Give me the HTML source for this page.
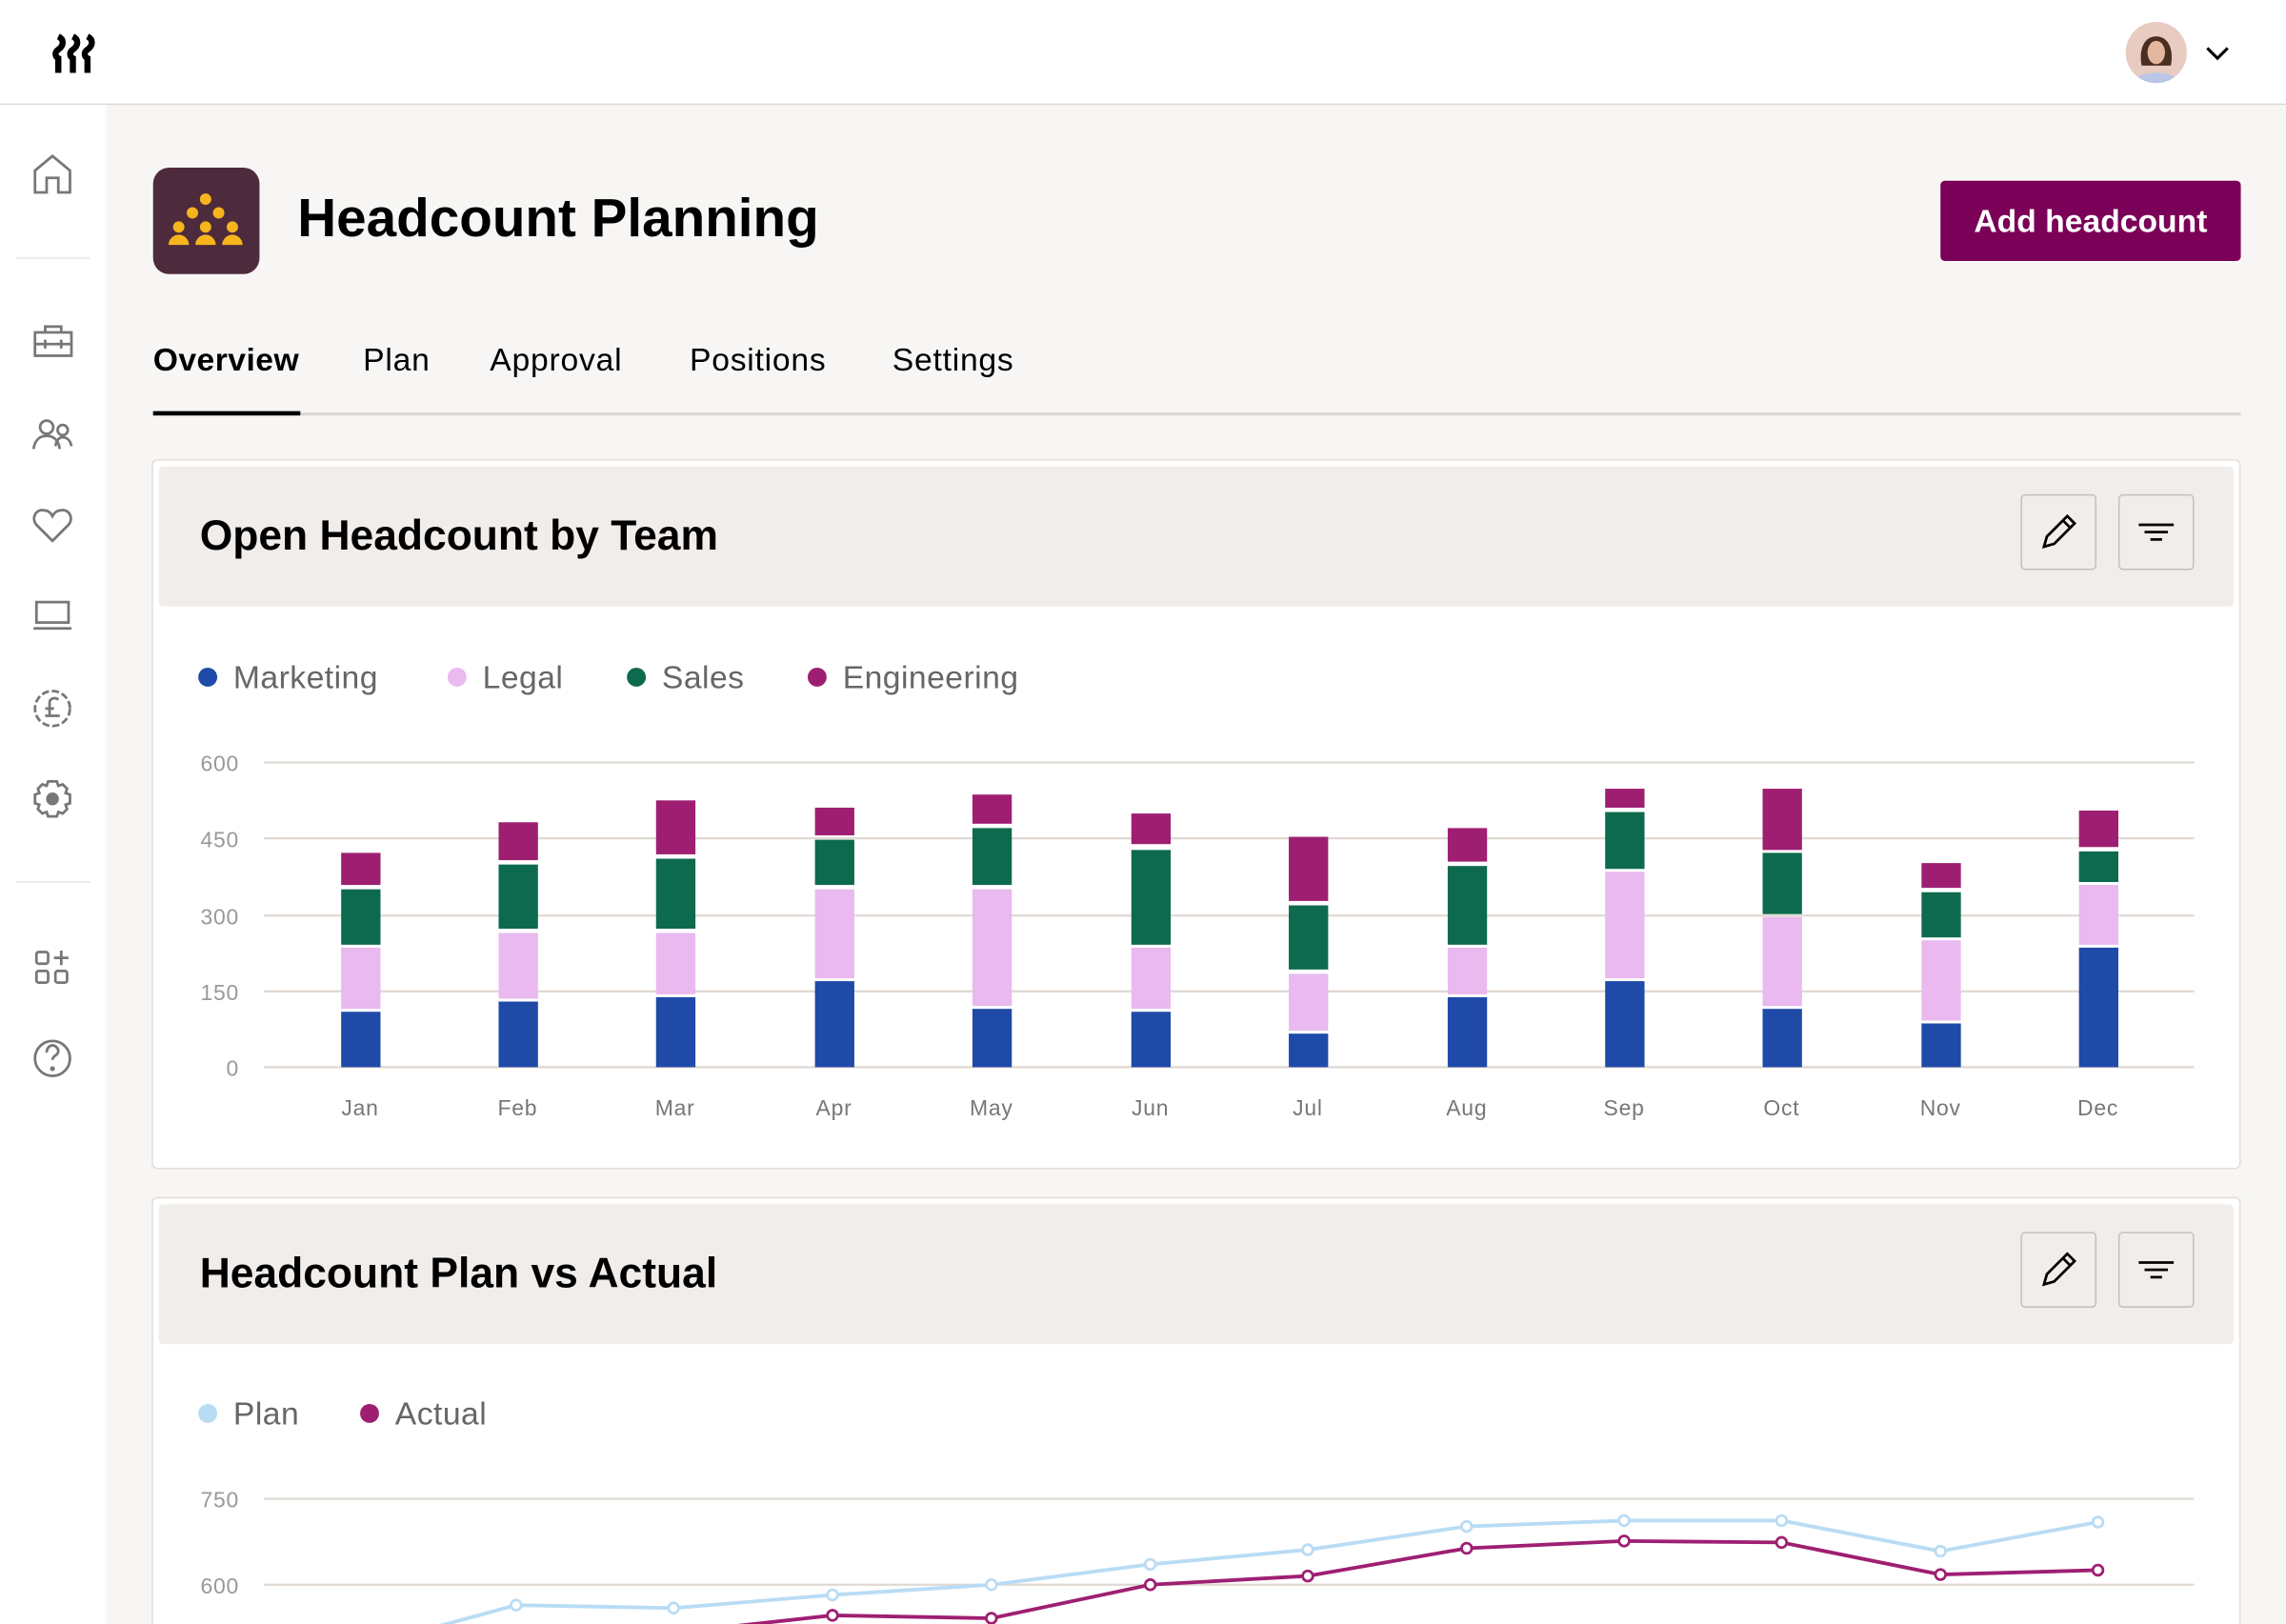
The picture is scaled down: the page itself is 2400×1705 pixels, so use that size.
<!DOCTYPE html>
<html><head><meta charset="utf-8">
<style>
*{box-sizing:border-box;margin:0;padding:0}
html,body{width:2400px;height:1704px;overflow:hidden;background:#f7f6f4}
#w{position:absolute;left:0;top:0;width:1568px;height:1114px;transform:scale(1.530612);transform-origin:0 0;font-family:"Liberation Sans",sans-serif;background:#f7f6f4;overflow:hidden}
.abs{position:absolute}
#hdr{left:0;top:0;width:1568px;height:72px;background:#fff;border-bottom:1.5px solid #e0d9d3}
#side{left:0;top:72px;width:73px;height:1050px;background:#fff}
.t{position:absolute;white-space:nowrap}
.tab{position:absolute;white-space:nowrap;font-size:22px;letter-spacing:0.5px;top:234px}
.card{position:absolute;left:104px;width:1433px;background:#fff;border:1.5px solid #e3ddd8;border-radius:4px}
.ch{position:absolute;left:4px;top:4px;right:4px;height:96px;background:#f1edea;border-radius:3px}
.ib{position:absolute;width:52px;height:52px;border:1.5px solid #c4c0bd;border-radius:3px;background:#f1edea}
.leg{position:absolute;font-size:22px;color:#666;white-space:nowrap;letter-spacing:0.3px}
.dot{display:inline-block;width:13px;height:13px;border-radius:50%;margin-right:11px;vertical-align:1px}
</style></head><body><div id="w">
<div id="hdr" class="abs">
<svg class="abs" style="left:34px;top:22px" width="40" height="30" viewBox="0 0 40 30"><g fill="none" stroke="#000" stroke-width="4.2"><path d="M6 3c4 2 4 6 0 9c-3 2 -2 5 0 6v10"/><path d="M16 3c4 2 4 6 0 9c-3 2 -2 5 0 6v10"/><path d="M26 3c4 2 4 6 0 9c-3 2 -2 5 0 6v10"/></g></svg>
<svg class="abs" style="left:1458px;top:15px" width="42" height="42" viewBox="0 0 42 42"><defs><clipPath id="c"><circle cx="21" cy="21" r="21"/></clipPath></defs><g clip-path="url(#c)"><rect width="42" height="42" fill="#e8cbc1"/><path d="M11 30c-2-10 1-20 10-20s12 10 10 20z" fill="#4a2e22"/><ellipse cx="21" cy="21" rx="6" ry="8" fill="#e3b79e"/><path d="M4 44c2-7 9-9 17-9s15 2 17 9z" fill="#b9c6e6"/></g></svg>
<svg class="abs" style="left:1512px;top:30px" width="18" height="12" viewBox="0 0 18 12"><path d="M2 3l7 7 7-7" fill="none" stroke="#000" stroke-width="2"/></svg>
</div>
<div id="side" class="abs">
<svg width="73" height="700" viewBox="0 72 73 700" fill="none" stroke="#777" stroke-width="1.8">
<path d="M24 132V117l12-10 12 10v15h-8v-10h-8v10z"/>
<line x1="11" y1="177" x2="62" y2="177" stroke="#eee" stroke-width="1.5"/>
<rect x="24" y="228" width="25" height="16"/><path d="M31 228v-4h11v4M24 236h25M31 233v6M42 233v6"/>
<circle cx="32" cy="293" r="4.5"/><circle cx="43" cy="295" r="3.5"/><path d="M23 308c1-7 5-9 9-9s8 2 9 9M38 306c1-5 3-6 5-6s5 1 6 6"/>
<path d="M36 371l-11-11c-4-5 0-11 5-10 3 0 5 2 6 4 1-2 3-4 6-4 5-1 9 5 5 10z"/>
<rect x="25" y="413" width="22" height="14"/><path d="M23 431h26"/>
<circle cx="36" cy="486" r="12" stroke-dasharray="5 2"/><path d="M40 480c-2-2-6-1-6 2v9M31 486h6M31 491h10"/>
<path d="M33 536h6l1 3 3-1 3 3-1 3 3 1v6l-3 1 1 3-3 3-3-1-1 3h-6l-1-3-3 1-3-3 1-3-3-1v-6l3-1-1-3 3-3 3 1z"/><circle cx="36" cy="548" r="3.5" fill="#777"/>
<line x1="11" y1="605" x2="62" y2="605" stroke="#eee" stroke-width="1.5"/>
<rect x="25" y="653" width="8" height="8" rx="1.5"/><rect x="25" y="666" width="8" height="8" rx="1.5"/><rect x="38" y="666" width="8" height="8" rx="1.5"/><path d="M42 652v10M37 657h10"/>
<circle cx="36" cy="726" r="12"/><path d="M32 722c0-3 2-5 4-5s4 2 4 4c0 3-4 3-4 6"/><circle cx="36" cy="733" r="0.8" fill="#777"/>
</svg>
</div>
<div class="abs" style="left:105px;top:115px;width:73px;height:73px;background:#4e2b3c;border-radius:11px">
<svg width="73" height="73" viewBox="0 0 73 73" fill="#f6b51d"><circle cx="36" cy="21.6" r="3.9"/><circle cx="27" cy="31" r="3.9"/><circle cx="45" cy="31" r="3.9"/><circle cx="17.6" cy="40.7" r="3.9"/><circle cx="36" cy="40.7" r="3.9"/><circle cx="54.4" cy="40.7" r="3.9"/><path d="M10.6 53a7 7 0 0 1 14 0zM29 53a7 7 0 0 1 14 0zM47.4 53a7 7 0 0 1 14 0z"/></svg></div>
<div class="t" style="left:204px;top:129px;font-size:37px;font-weight:600;color:#000">Headcount Planning</div>
<div class="abs" style="left:1331px;top:124px;width:206px;height:55px;background:#7a0058;border-radius:3px;color:#fff;font-size:22px;font-weight:600;text-align:center;line-height:55px">Add headcount</div>
<div class="tab" style="left:105px;font-weight:600;letter-spacing:0.3px">Overview</div>
<div class="tab" style="left:249px">Plan</div>
<div class="tab" style="left:336px">Approval</div>
<div class="tab" style="left:473px">Positions</div>
<div class="tab" style="left:612px">Settings</div>
<div class="abs" style="left:105px;top:283px;width:1432px;height:1.5px;background:#ddd6d0"></div>
<div class="abs" style="left:105px;top:282px;width:101px;height:3px;background:#000"></div>

<div class="card" style="top:315px;height:487px"><div class="ch"></div>
<div class="t" style="left:32px;top:36px;font-size:29px;font-weight:600">Open Headcount by Team</div>
<div class="ib" style="left:1281px;top:23px"><svg width="50" height="50" viewBox="0 0 50 50"><path d="M15 35l2-7 14-14 5 5-14 14z M28 17l5 5" fill="none" stroke="#000" stroke-width="1.8"/></svg></div>
<div class="ib" style="left:1348px;top:23px"><svg width="50" height="50" viewBox="0 0 50 50"><path d="M13 20h24M17 25h16M21 30h8" stroke="#000" stroke-width="1.8"/></svg></div>
</div>
<div class="leg" style="left:136px;top:452px"><span class="dot" style="background:#1f4aa8"></span>Marketing</div>
<div class="leg" style="left:307px;top:452px"><span class="dot" style="background:#e9b9f0"></span>Legal</div>
<div class="leg" style="left:430px;top:452px"><span class="dot" style="background:#0e6a4e"></span>Sales</div>
<div class="leg" style="left:554px;top:452px"><span class="dot" style="background:#9e1f72"></span>Engineering</div>
<svg class="abs" style="left:0;top:0" width="1568" height="1114" viewBox="0 0 1568 1114" font-family="Liberation Sans, sans-serif">
<g stroke="#e0d9d3" stroke-width="1.5"><line x1="181" y1="523" x2="1505" y2="523"/><line x1="181" y1="575" x2="1505" y2="575"/><line x1="181" y1="628" x2="1505" y2="628"/><line x1="181" y1="680" x2="1505" y2="680"/><line x1="181" y1="732" x2="1505" y2="732"/></g>
<g fill="#999" font-size="15" text-anchor="end" letter-spacing="0.5"><text x="164" y="529">600</text><text x="164" y="581">450</text><text x="164" y="634">300</text><text x="164" y="686">150</text><text x="164" y="738">0</text></g>
<g fill="#777" font-size="15" text-anchor="middle" letter-spacing="0.5"><text x="247" y="765">Jan</text><text x="355" y="765">Feb</text><text x="463" y="765">Mar</text><text x="572" y="765">Apr</text><text x="680" y="765">May</text><text x="789" y="765">Jun</text><text x="897" y="765">Jul</text><text x="1006" y="765">Aug</text><text x="1114" y="765">Sep</text><text x="1222" y="765">Oct</text><text x="1331" y="765">Nov</text><text x="1439" y="765">Dec</text></g>
<g fill="#1f4aa8"><rect x="234" y="694" width="27" height="38"/><rect x="342" y="687" width="27" height="45"/><rect x="450" y="684" width="27" height="48"/><rect x="559" y="673" width="27" height="59"/><rect x="667" y="692" width="27" height="40"/><rect x="776" y="694" width="27" height="38"/><rect x="884" y="709" width="27" height="23"/><rect x="993" y="684" width="27" height="48"/><rect x="1101" y="673" width="27" height="59"/><rect x="1209" y="692" width="27" height="40"/><rect x="1318" y="702" width="27" height="30"/><rect x="1426" y="650" width="27" height="82"/></g>
<g fill="#e9b9f0"><rect x="234" y="650" width="27" height="42"/><rect x="342" y="640" width="27" height="45"/><rect x="450" y="640" width="27" height="42"/><rect x="559" y="610" width="27" height="61"/><rect x="667" y="610" width="27" height="80"/><rect x="776" y="650" width="27" height="42"/><rect x="884" y="668" width="27" height="39"/><rect x="993" y="650" width="27" height="32"/><rect x="1101" y="598" width="27" height="73"/><rect x="1209" y="629" width="27" height="61"/><rect x="1318" y="645" width="27" height="55"/><rect x="1426" y="607" width="27" height="41"/></g>
<g fill="#0e6a4e"><rect x="234" y="610" width="27" height="38"/><rect x="342" y="593" width="27" height="44"/><rect x="450" y="589" width="27" height="48"/><rect x="559" y="576" width="27" height="31"/><rect x="667" y="568" width="27" height="39"/><rect x="776" y="583" width="27" height="65"/><rect x="884" y="621" width="27" height="44"/><rect x="993" y="594" width="27" height="54"/><rect x="1101" y="557" width="27" height="39"/><rect x="1209" y="585" width="27" height="42"/><rect x="1318" y="612" width="27" height="31"/><rect x="1426" y="584" width="27" height="21"/></g>
<g fill="#9e1f72"><rect x="234" y="585" width="27" height="22"/><rect x="342" y="564" width="27" height="26"/><rect x="450" y="549" width="27" height="37"/><rect x="559" y="554" width="27" height="19"/><rect x="667" y="545" width="27" height="20"/><rect x="776" y="558" width="27" height="21"/><rect x="884" y="574" width="27" height="44"/><rect x="993" y="568" width="27" height="23"/><rect x="1101" y="541" width="27" height="13"/><rect x="1209" y="541" width="27" height="42"/><rect x="1318" y="592" width="27" height="17"/><rect x="1426" y="556" width="27" height="25"/></g>
</svg>

<div class="card" style="top:821px;height:320px"><div class="ch"></div>
<div class="t" style="left:32px;top:36px;font-size:29px;font-weight:600">Headcount Plan vs Actual</div>
<div class="ib" style="left:1281px;top:23px"><svg width="50" height="50" viewBox="0 0 50 50"><path d="M15 35l2-7 14-14 5 5-14 14z M28 17l5 5" fill="none" stroke="#000" stroke-width="1.8"/></svg></div>
<div class="ib" style="left:1348px;top:23px"><svg width="50" height="50" viewBox="0 0 50 50"><path d="M13 20h24M17 25h16M21 30h8" stroke="#000" stroke-width="1.8"/></svg></div>
</div>
<div class="leg" style="left:136px;top:957px"><span class="dot" style="background:#b9dcf5"></span>Plan</div>
<div class="leg" style="left:247px;top:957px"><span class="dot" style="background:#9e1f72"></span>Actual</div>
<svg class="abs" style="left:0;top:0" width="1568" height="1114" viewBox="0 0 1568 1114" font-family="Liberation Sans, sans-serif">
<g stroke="#e0d9d3" stroke-width="1.5"><line x1="181" y1="1028" x2="1505" y2="1028"/><line x1="181" y1="1087" x2="1505" y2="1087"/></g>
<g fill="#999" font-size="15" text-anchor="end" letter-spacing="0.5"><text x="164" y="1034">750</text><text x="164" y="1093">600</text></g>
<polyline fill="none" stroke="#b9dcf5" stroke-width="2.5" points="247,1130 354,1101 462,1103 571,1094 680,1087 789,1073 897,1063 1006,1047 1114,1043 1222,1043 1331,1064 1439,1044"/>
<polyline fill="none" stroke="#9e1f72" stroke-width="2.5" points="462,1120 571,1108 680,1110 789,1087 897,1081 1006,1062 1114,1057 1222,1058 1331,1080 1439,1077"/>
<g fill="#fff" stroke="#b9dcf5" stroke-width="1.8"><circle cx="354" cy="1101" r="3.5"/><circle cx="462" cy="1103" r="3.5"/><circle cx="571" cy="1094" r="3.5"/><circle cx="680" cy="1087" r="3.5"/><circle cx="789" cy="1073" r="3.5"/><circle cx="897" cy="1063" r="3.5"/><circle cx="1006" cy="1047" r="3.5"/><circle cx="1114" cy="1043" r="3.5"/><circle cx="1222" cy="1043" r="3.5"/><circle cx="1331" cy="1064" r="3.5"/><circle cx="1439" cy="1044" r="3.5"/></g>
<g fill="#fff" stroke="#9e1f72" stroke-width="1.8"><circle cx="571" cy="1108" r="3.5"/><circle cx="680" cy="1110" r="3.5"/><circle cx="789" cy="1087" r="3.5"/><circle cx="897" cy="1081" r="3.5"/><circle cx="1006" cy="1062" r="3.5"/><circle cx="1114" cy="1057" r="3.5"/><circle cx="1222" cy="1058" r="3.5"/><circle cx="1331" cy="1080" r="3.5"/><circle cx="1439" cy="1077" r="3.5"/></g>
</svg>
</div></body></html>
